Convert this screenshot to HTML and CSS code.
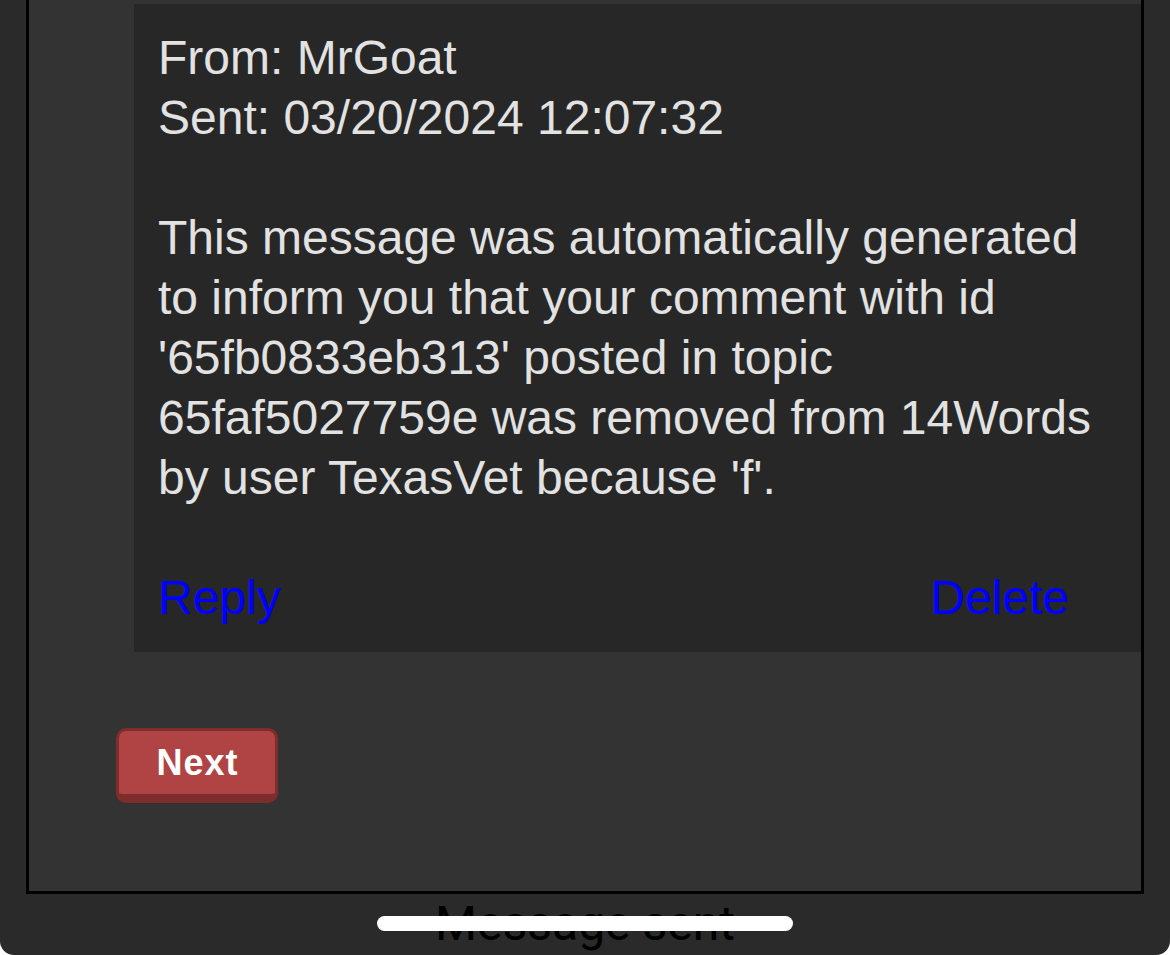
FILE: index.html
```html
<!DOCTYPE html>
<html lang="en">
<head>
<meta charset="utf-8">
<title>Message</title>
<link rel="stylesheet" href="styles.css">
</head>
<body>
<div class="screen">
  <div class="panel">
    <div class="message">
      <p class="body">From: MrGoat<br>Sent: 03/20/2024 12:07:32<br><br>This message was automatically generated to inform you that your comment with id '65fb0833eb313' posted in topic 65faf5027759e was removed from 14Words by user TexasVet because 'f'.</p>
      <div class="actions">
        <a href="#" class="link">Reply</a>
        <a href="#" class="link">Delete</a>
      </div>
    </div>
    <div class="nav">
      <button class="btn-next" type="button">Next</button>
    </div>
  </div>
  <div class="status">Message sent</div>
  <div class="home-indicator"></div>
</div>
</body>
</html>
```
FILE: styles.css
```css
html, body {
  margin: 0;
  padding: 0;
  background: #ffffff;
}

.screen {
  position: relative;
  height: 955px;
  overflow: hidden;
  background: #2a2a2a;
  border-radius: 0 0 14px 14px;
  padding: 0 26px;
  box-sizing: border-box;
}

.panel {
  background: #333333;
  border: 3px solid #000000;
  border-top: none;
  padding-top: 4px;
  height: 894px;
  box-sizing: border-box;
}

.message {
  margin-left: 105px;
  background: #272727;
  padding: 24px 20px 24px 24px;
  font-family: "Liberation Sans", Arial, sans-serif;
  font-size: 48px;
  line-height: 60px;
  color: #e2e2e2;
}

.body {
  margin: 0 0 60px 0;
}

.actions {
  display: flex;
  justify-content: space-between;
  padding-right: 52px;
}

.link {
  color: #0000ff;
  text-decoration: none;
}

.nav {
  padding: 76px 0 0 87px;
}

.btn-next {
  display: block;
  width: 162px;
  height: 75px;
  margin: 0;
  padding: 0 0 0 1px;
  background: #b04343;
  border: 3px solid #7e2d2d;
  border-bottom-width: 9px;
  border-radius: 10px;
  color: #ffffff;
  font-family: "Liberation Sans", Arial, sans-serif;
  font-weight: bold;
  font-size: 36px;
  letter-spacing: 1px;
  line-height: 60px;
  box-sizing: border-box;
}

.status {
  text-align: center;
  font-family: Roboto, "Liberation Sans", sans-serif;
  font-size: 48px;
  line-height: 60px;
  color: #000000;
}

.home-indicator {
  position: absolute;
  left: 377px;
  bottom: 24px;
  width: 416px;
  height: 15px;
  border-radius: 8px;
  background: #ffffff;
}
```
